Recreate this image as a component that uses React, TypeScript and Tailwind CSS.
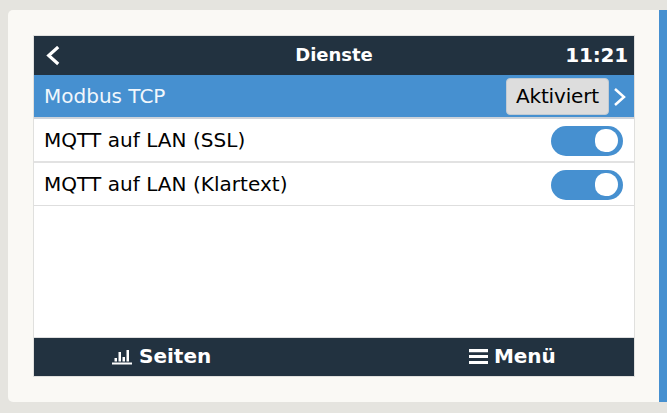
import React from 'react';

function Toggle() {
  return (
    <div className="mt-px flex h-[30px] w-[72px] items-center justify-end rounded-full bg-[#4690d0] pr-[5px]">
      <div className="h-[23px] w-[23px] rounded-l-[10.5px] rounded-r-[12px] bg-white" />
    </div>
  );
}

function ToggleRow({ label, divider }: { label: string; divider: string }) {
  return (
    <div className={`flex items-center justify-between pr-[11px] pl-[10px] text-[20px] leading-none tracking-[0.04px] text-black ${divider}`}>
      <span>{label}</span>
      <Toggle />
    </div>
  );
}

export default function App() {
  return (
    <div className="h-[413px] w-[667px] overflow-hidden bg-[#e5e4df] pt-[10px] pl-2 font-['DejaVu_Sans',sans-serif] whitespace-nowrap">
      <div className="flex h-[392px] overflow-hidden rounded-l-[5px] bg-[#faf9f5]">
        <div className="w-[651px] pt-[25px] pl-[25px]">
          <div className="flex h-[342px] w-[602px] flex-col border border-[#e0e0de] bg-white">
            <header className="grid h-[39px] grid-cols-[1fr_auto_1fr] items-center bg-[#223240] font-bold text-white">
              <svg className="ml-[12px] h-[20px] w-[14px]" viewBox="0 0 14 20" fill="none" stroke="currentColor" strokeWidth="3.2">
                <path d="M12.2 1 2.700 9.500l9.500 8.500" />
              </svg>
              <h1 className="pb-px text-[18px] leading-none tracking-[-0.05px]">Dienste</h1>
              <span className="justify-self-end pr-[6px] pb-[2px] text-[20px] leading-none tracking-[-0.2px]">11:21</span>
            </header>
            <div className="flex h-[44px] items-center border-b-2 border-[#cdd3da] bg-[#4690d0] pl-[10px] text-[20px] leading-none text-white">
              <span className="flex-1 text-[#f1f7fc]">Modbus TCP</span>
              <span className="mt-px flex h-[37px] w-[103px] items-center justify-center rounded-[4px] border border-[#c2cbd3] bg-[#dddddd] pb-px tracking-[-0.15px] text-black">Aktiviert</span>
              <svg className="mt-px mr-[8px] ml-[5px] h-[20px] w-[12px]" viewBox="0 0 12 20" fill="none" stroke="currentColor" strokeWidth="2.5">
                <path d="M1 2l9 8-9 8" />
              </svg>
            </div>
            <ToggleRow label="MQTT auf LAN (SSL)" divider="h-[44px] border-b-2 border-[#e2e2e2]" />
            <ToggleRow label="MQTT auf LAN (Klartext)" divider="h-[43px] border-b border-[#dedede]" />
            <div className="flex-1 border-b border-[#dedede]" />
            <footer className="flex h-[38px] items-center bg-[#223240] pb-[2px] text-[20px] leading-none font-bold text-white">
              <div className="flex w-[357px] items-center pl-[77px]">
                <svg className="mr-[7px] ml-px h-[18px] w-[20px]" viewBox="0 0 20 18" fill="currentColor">
                  <path d="M0 15.500h20v2H0zM2.500 11h2.500v3.500H2.500zM6.500 5h2.500v9.500H6.500zM10.500 10h2.500v4.500H10.500zM14.500 3h2.500v11.500H14.500z" />
                </svg>
                <span>Seiten</span>
              </div>
              <div className="flex items-center pl-[78px]">
                <svg className="mr-[6px] h-[15px] w-[19px]" viewBox="0 0 19 15" fill="currentColor">
                  <path d="M0 0h19v3.300H0zM0 6h19v3H0zM0 12h19v3.200H0z" />
                </svg>
                <span className="tracking-[-0.1px]">Menü</span>
              </div>
            </footer>
          </div>
        </div>
        <div className="flex-1 bg-[#4690d0]" />
      </div>
    </div>
  );
}
